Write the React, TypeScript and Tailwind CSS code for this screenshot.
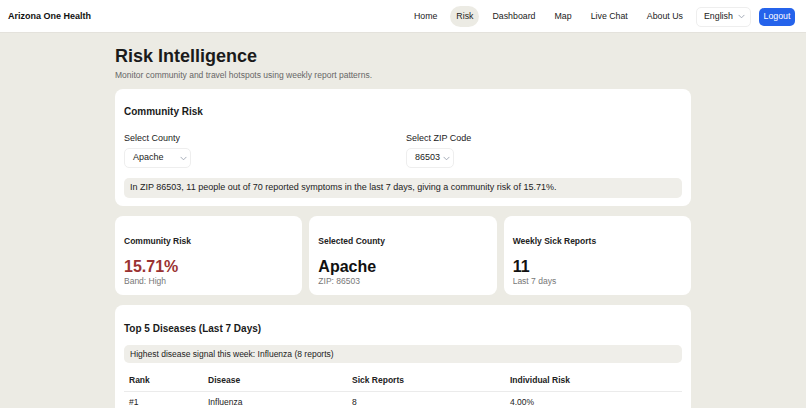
import React from "react";

const Chevron = () => (
    <svg width="7" height="5" viewBox="0 0 8 5" fill="none" className="text-gray-400 shrink-0">
        <path d="M1 1l3 3 3-3" stroke="currentColor" strokeWidth="1" strokeLinecap="round" strokeLinejoin="round"/>
    </svg>
)

const Select = ({value, width}: {value: string, width: string}) => (
    <div className={`${width} h-[20px] flex items-center justify-between pl-[8px] pr-[3px] bg-white border border-[#eeeeee] rounded-[5px] text-[9px] text-[#222]`}>
        <span>{value}</span>
        <Chevron/>
    </div>
)

const StatCard = ({label, value, sub, red}: {label: string, value: string, sub: string, red?: boolean}) => (
    <div className="bg-white rounded-[8px] h-[79px] px-[9px] pt-[20px]">
        <div className="text-[8.5px] font-bold text-[#222] leading-[10px]">{label}</div>
        <div className={`text-[16px] font-bold leading-[18px] mt-[12px] ${red ? "text-[#9a3232]" : "text-[#111]"}`}>{value}</div>
        <div className="text-[8.5px] text-[#777] leading-[10px]">{sub}</div>
    </div>
)

const App = () => {
    return (
        <div className="min-h-[408px] bg-[#ecebe4] text-[#222]" style={{fontFamily: '"Liberation Sans", Arial, sans-serif'}}>
            <div className="h-[33px] bg-white border-b border-[#e4e2dc] flex items-center justify-between pl-[8px] pr-[11px] pt-[1px]">
                <div className="text-[9px] font-bold text-[#111]">Arizona One Health</div>
                <div className="flex items-center text-[8.8px] text-[#222]">
                    <div className="flex items-center gap-[7px]">
                        <span className="px-[6px] py-[4px]">Home</span>
                        <span className="px-[6px] py-[4px] rounded-full bg-[#ecebe4]">Risk</span>
                        <span className="px-[6px] py-[4px]">Dashboard</span>
                        <span className="px-[6px] py-[4px]">Map</span>
                        <span className="px-[6px] py-[4px]">Live Chat</span>
                        <span className="px-[6px] py-[4px]">About Us</span>
                    </div>
                    <div className="ml-[7px] w-[55px] h-[20px] flex items-center justify-between pl-[7px] pr-[5px] border border-[#eeeeee] rounded-[5px]">
                        <span>English</span>
                        <Chevron/>
                    </div>
                    <div className="ml-[8px] w-[36px] h-[18px] flex items-center justify-center bg-[#2563eb] text-white rounded-[5px]">Logout</div>
                </div>
            </div>

            <div className="w-[576px] mx-auto pt-[12px]">
                <h1 className="text-[18px] font-bold leading-[22px] text-[#1a1a1a]">Risk Intelligence</h1>
                <p className="text-[8.5px] text-[#666] mt-[2px] leading-[12px]">Monitor community and travel hotspots using weekly report patterns.</p>

                <div className="mt-[8px] bg-white rounded-[8px] px-[9px] pt-[17px] pb-[8px]">
                    <div className="text-[10px] font-bold leading-[12px] text-[#1a1a1a]">Community Risk</div>
                    <div className="grid grid-cols-2 mt-[15px]">
                        <div>
                            <div className="text-[9px] leading-[11px]">Select County</div>
                            <div className="mt-[4px]"><Select value="Apache" width="w-[67px]"/></div>
                        </div>
                        <div className="pl-[3px]">
                            <div className="text-[9px] leading-[11px]">Select ZIP Code</div>
                            <div className="mt-[4px]"><Select value="86503" width="w-[48px]"/></div>
                        </div>
                    </div>
                    <div className="mt-[10px] h-[20px] flex items-center px-[6px] bg-[#efeee9] rounded-[5px] text-[9px]">
                        In ZIP 86503, 11 people out of 70 reported symptoms in the last 7 days, giving a community risk of 15.71%.
                    </div>
                </div>

                <div className="mt-[10px] grid grid-cols-3 gap-[7px]">
                    <StatCard label="Community Risk" value="15.71%" sub="Band: High" red/>
                    <StatCard label="Selected County" value="Apache" sub="ZIP: 86503"/>
                    <StatCard label="Weekly Sick Reports" value="11" sub="Last 7 days"/>
                </div>

                <div className="mt-[10px] bg-white rounded-t-[8px] px-[9px] pt-[18px] pb-[20px]">
                    <div className="text-[10px] font-bold leading-[12px] text-[#1a1a1a]">Top 5 Diseases (Last 7 Days)</div>
                    <div className="mt-[10px] h-[18px] flex items-center px-[6px] bg-[#efeee9] rounded-[5px] text-[8.5px]">
                        Highest disease signal this week: Influenza (8 reports)
                    </div>
                    <table className="mt-[6px] w-full text-[8.5px] leading-[10px] text-left table-fixed">
                        <thead>
                            <tr className="border-b border-[#ebebeb]">
                                <th className="w-[84px] pl-[5px] py-[6px] font-bold">Rank</th>
                                <th className="w-[144px] font-bold">Disease</th>
                                <th className="w-[158px] font-bold">Sick Reports</th>
                                <th className="font-bold">Individual Risk</th>
                            </tr>
                        </thead>
                        <tbody>
                            <tr>
                                <td className="pl-[5px] py-[5px]">#1</td>
                                <td>Influenza</td>
                                <td>8</td>
                                <td>4.00%</td>
                            </tr>
                        </tbody>
                    </table>
                </div>
            </div>
        </div>
    )
}
export default App
